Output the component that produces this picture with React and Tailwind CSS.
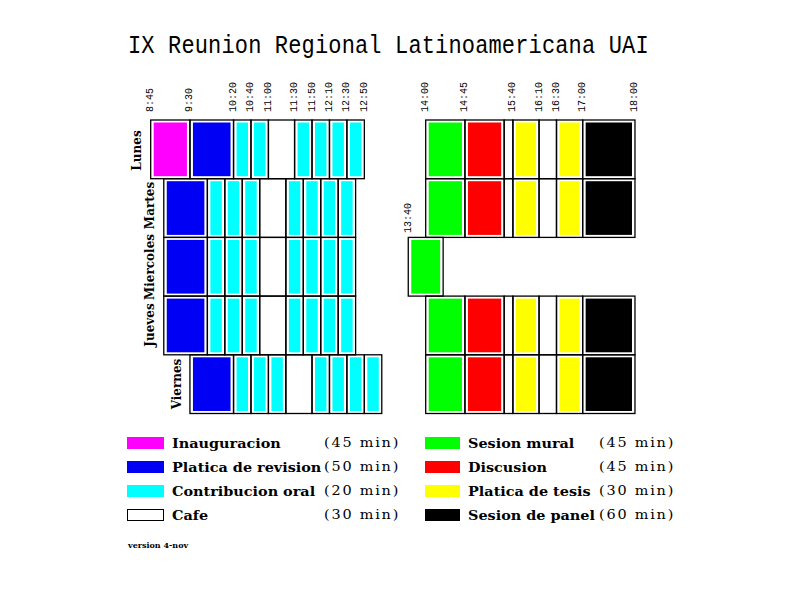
const S = 0.872;
const ROW_Y = 120;
const ROW_H = 58.7;

const m = (h, min) => h * 60 + min;
const lx = (t) => 150.7 + (t - m(8, 45)) * S;
const rx = (t) => 425.7 + (t - m(14, 0)) * S;

const COLORS = {
  M: '#ff00ff',
  B: '#0000f4',
  C: '#00ffff',
  G: '#00ff00',
  R: '#ff0000',
  Y: '#ffff00',
  K: '#000000',
  W: null,
};

const morningMid = [['B', 50], ['C', 20], ['C', 20], ['C', 20], ['W', 30], ['C', 20], ['C', 20], ['C', 20], ['C', 20]];
const afternoon = [['G', 45], ['R', 45], ['W', 10], ['Y', 30], ['W', 20], ['Y', 30], ['K', 60]];

const rows = [
  { am: { start: m(8, 45), seq: [['M', 45], ['B', 50], ['C', 20], ['C', 20], ['W', 30], ['C', 20], ['C', 20], ['C', 20], ['C', 20]] }, pm: { start: m(14, 0), seq: afternoon } },
  { am: { start: m(9, 0), seq: morningMid }, pm: { start: m(14, 0), seq: afternoon } },
  { am: { start: m(9, 0), seq: morningMid }, pm: { start: m(13, 40), seq: [['G', 40]] } },
  { am: { start: m(9, 0), seq: morningMid }, pm: { start: m(14, 0), seq: afternoon } },
  { am: { start: m(9, 30), seq: [['B', 50], ['C', 20], ['C', 20], ['C', 20], ['W', 30], ['C', 20], ['C', 20], ['C', 20], ['C', 20]] }, pm: { start: m(14, 0), seq: afternoon } },
];

const days = [
  { name: 'Lunes', cx: 137, cy: 150.5 },
  { name: 'Martes', cx: 150, cy: 205.5 },
  { name: 'Miercoles', cx: 150, cy: 267 },
  { name: 'Jueves', cx: 150, cy: 325 },
  { name: 'Viernes', cx: 177, cy: 384 },
];

const amTimes = ['8:45', '9:30', '10:20', '10:40', '11:00', '11:30', '11:50', '12:10', '12:30', '12:50'];
const pmTimes = ['14:00', '14:45', '15:40', '16:10', '16:30', '17:00', '18:00'];

const toMin = (s) => {
  const [h, mm] = s.split(':').map(Number);
  return m(h, mm);
};

const legendLeft = [
  { color: '#ff00ff', label: 'Inauguracion', dur: '(45 min)' },
  { color: '#0000f4', label: 'Platica de revision', dur: '(50 min)' },
  { color: '#00ffff', label: 'Contribucion oral', dur: '(20 min)' },
  { color: null, label: 'Cafe', dur: '(30 min)' },
];

const legendRight = [
  { color: '#00ff00', label: 'Sesion mural', dur: '(45 min)' },
  { color: '#ff0000', label: 'Discusion', dur: '(45 min)' },
  { color: '#ffff00', label: 'Platica de tesis', dur: '(30 min)' },
  { color: '#000000', label: 'Sesion de panel', dur: '(60 min)' },
];

// one block of consecutive sessions along a row
function Block({ start, seq, y, xf }) {
  let t = start;
  const cells = seq.map(([k, len], i) => {
    const x1 = xf(t);
    t += len;
    const x2 = xf(t);
    return { k, x1, x2, i };
  });
  return (
    <g>
      {cells.map(({ k, x1, x2, i }) => (
        <g key={i}>
          {COLORS[k] && (
            <rect x={x1 + 3} y={y + 2.5} width={x2 - x1 - 6} height={ROW_H - 5} fill={COLORS[k]} />
          )}
          <rect x={x1} y={y} width={x2 - x1} height={ROW_H} fill="none" stroke="#000" strokeWidth="1.3" />
        </g>
      ))}
    </g>
  );
}

function TimeLabel({ x, y, text }) {
  return (
    <text
      transform={`translate(${x} ${y}) rotate(-90)`}
      fontFamily="'Liberation Mono', monospace"
      fontSize="10"
      dominantBaseline="central"
      fill="#000"
    >
      {text}
    </text>
  );
}

function Schedule() {
  return (
    <svg width="792" height="340" viewBox="0 80 792 340" className="block">
      {amTimes.map((t) => (
        <TimeLabel key={t} x={lx(toMin(t))} y={112} text={t} />
      ))}
      {pmTimes.map((t) => (
        <TimeLabel key={t} x={rx(toMin(t))} y={112} text={t} />
      ))}
      <TimeLabel x={rx(m(13, 40))} y={233} text="13:40" />

      {rows.map((r, i) => (
        <g key={i}>
          <Block start={r.am.start} seq={r.am.seq} y={ROW_Y + i * ROW_H} xf={lx} />
          <Block start={r.pm.start} seq={r.pm.seq} y={ROW_Y + i * ROW_H} xf={rx} />
        </g>
      ))}

      {days.map((d) => (
        <text
          key={d.name}
          transform={`translate(${d.cx} ${d.cy}) rotate(-90)`}
          fontFamily="'DejaVu Serif', serif"
          fontWeight="bold"
          fontSize="12"
          textAnchor="middle"
          dominantBaseline="central"
          fill="#000"
        >
          {d.name}
        </text>
      ))}
    </svg>
  );
}

function Legend({ items, boxW, labelW }) {
  return (
    <div className="flex flex-col">
      {items.map((it) => (
        <div key={it.label} className="flex items-center h-[24px]">
          <div
            className={it.color ? 'h-[12px] shrink-0' : 'h-[12px] shrink-0 border border-black bg-white'}
            style={{ width: boxW, backgroundColor: it.color || undefined }}
          />
          <div className="ml-[8px] shrink-0" style={{ width: labelW }}>
            <span className="inline-block origin-left scale-x-[1.2] font-bold text-[12px] leading-[24px] whitespace-nowrap">
              {it.label}
            </span>
          </div>
          <span className="inline-block origin-left scale-x-[1.2] text-[12px] tracking-[1.5px] leading-[24px] whitespace-nowrap">
            {it.dur}
          </span>
        </div>
      ))}
    </div>
  );
}

export default function App() {
  return (
    <div className="w-[792px] h-[612px] bg-white text-black flex flex-col overflow-hidden font-['DejaVu_Serif',serif]">
      <div className="h-[80px] pt-[35px] pl-[128px]">
        <span className="inline-block font-['Liberation_Mono',monospace] text-[22px] leading-[26px] tracking-[0.15px] whitespace-nowrap scale-y-[1.18] origin-[0_19px]">
          IX Reunion Regional Latinoamericana UAI
        </span>
      </div>

      <Schedule />

      <div className="flex pt-[11px] pl-[127px]">
        <div className="w-[298px]">
          <Legend items={legendLeft} boxW={37} labelW={152} />
        </div>
        <Legend items={legendRight} boxW={35} labelW={131} />
      </div>

      <div className="mt-[13px] pl-[128px] text-[8px] font-bold leading-[10px]">version 4-nov</div>
    </div>
  );
}
